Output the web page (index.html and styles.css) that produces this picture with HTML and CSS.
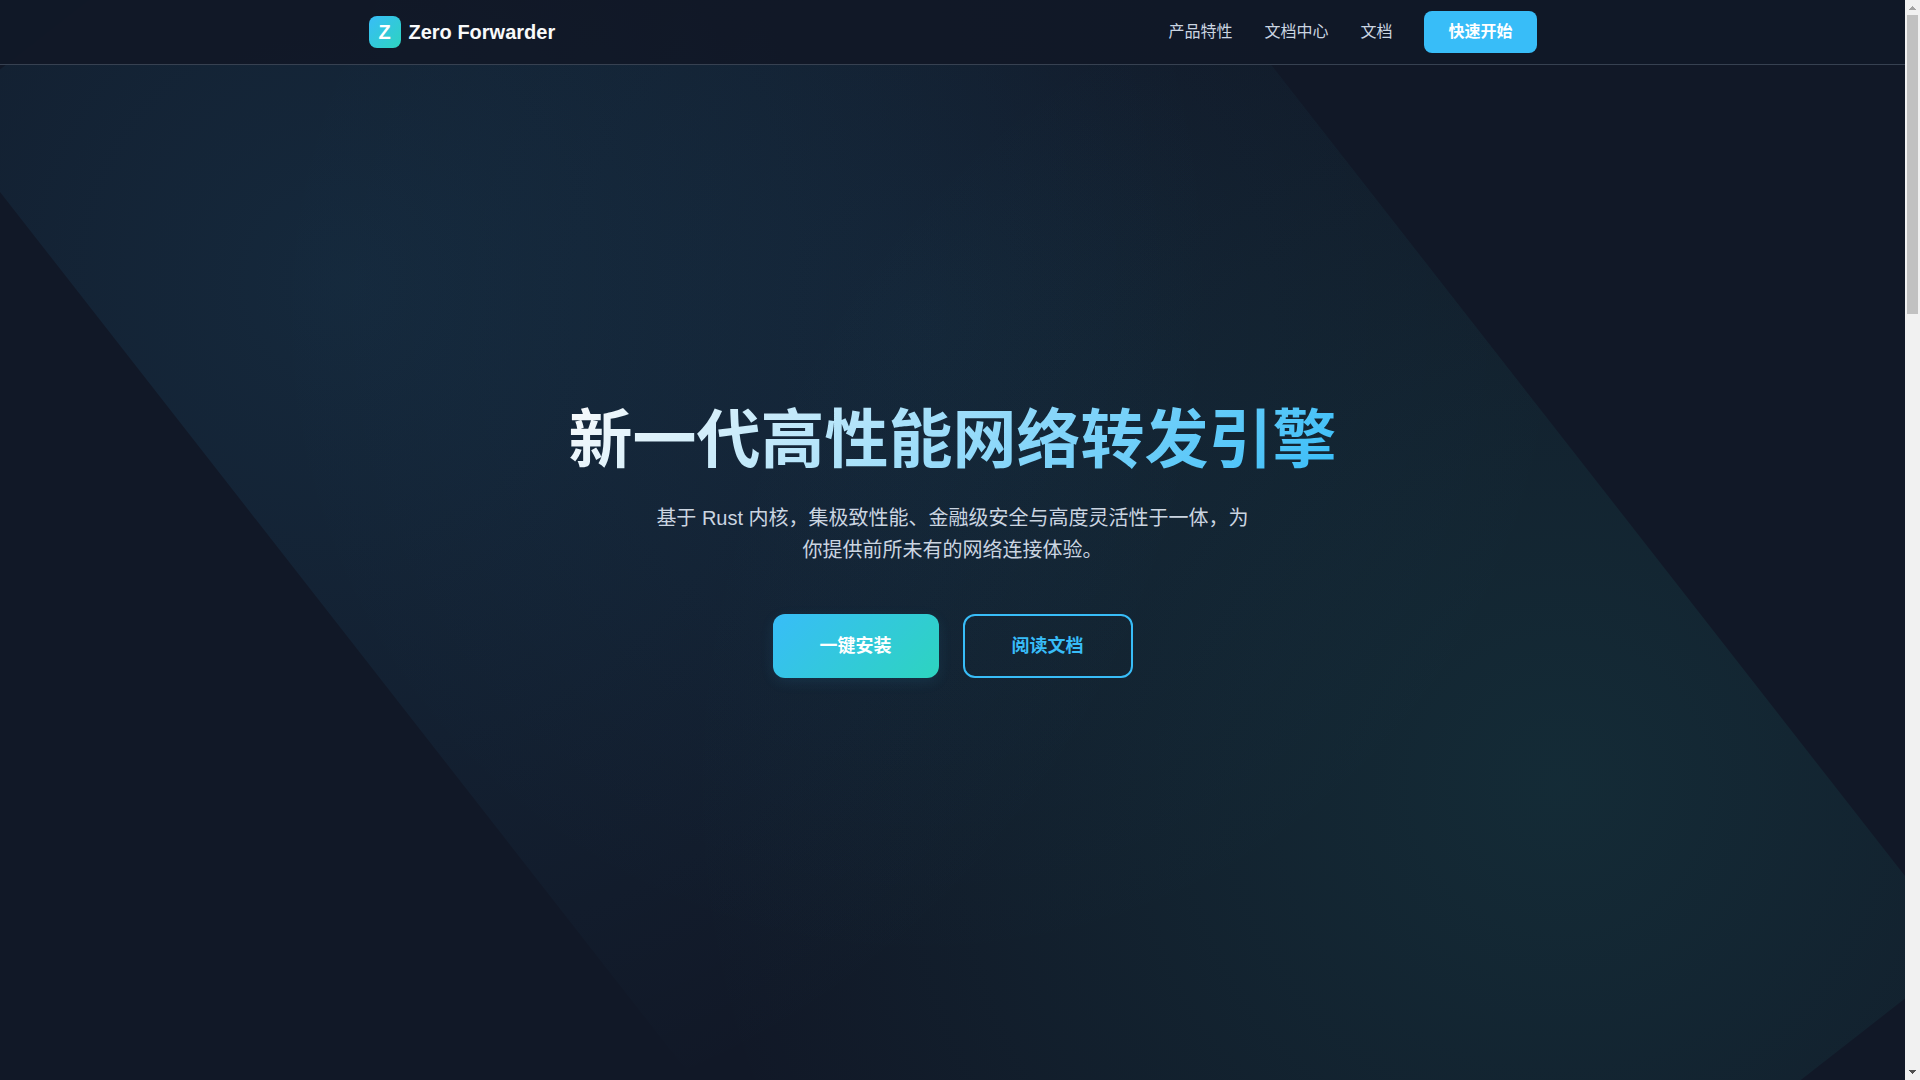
FILE: index.html
```html
<!DOCTYPE html>
<html lang="zh-CN">
<head>
    <meta charset="UTF-8">
    <meta name="viewport" content="width=device-width, initial-scale=1.0">
    <title>Zero Forwarder</title>
    <link rel="stylesheet" href="styles.css">
</head>
<body>

<div class="page">
    <header class="header">
        <div class="container nav">
            <a class="logo" href="#">
                <span class="logo-icon">Z</span>
                <span>Zero Forwarder</span>
            </a>
            <nav class="nav-links">
                <a href="#features">产品特性</a>
                <a href="#docs">文档中心</a>
                <a href="#doc">文档</a>
                <button type="button" class="nav-cta">快速开始</button>
            </nav>
        </div>
    </header>

    <main class="hero">
        <div class="hero-content">
            <h1>新一代高性能网络转发引擎</h1>
            <p>基于 Rust 内核，集极致性能、金融级安全与高度灵活性于一体，为你提供前所未有的网络连接体验。</p>
            <div class="hero-buttons">
                <button type="button" class="btn btn-primary">一键安装</button>
                <button type="button" class="btn btn-secondary">阅读文档</button>
            </div>
        </div>
    </main>
</div>

<div class="scrollbar" aria-hidden="true">
    <svg class="arrow arrow-up" width="15" height="15" viewBox="0 0 15 15"><path d="M4 10h7v-1h-1v-1h-1v-1h-1v-1h-1v1h-1v1h-1v1h-1z"/></svg>
    <div class="track"><div class="thumb"></div></div>
    <svg class="arrow arrow-down" width="15" height="15" viewBox="0 0 15 15"><path d="M4 5h7v1h-1v1h-1v1h-1v1h-1v-1h-1v-1h-1v-1h-1z"/></svg>
</div>

</body>
</html>
```

FILE: styles.css
```css
:root {
    --bg: #111827;
    --border: #374151;
    --text: #f9fafb;
    --text-light: #cbd5e1;
    --blue: #38bdf8;
    --teal: #2dd4bf;
}
* {
    margin: 0;
    padding: 0;
    box-sizing: border-box;
}
body {
    display: flex;
    height: 100vh;
    overflow: hidden;
    font-family: "Liberation Sans", "Noto Sans CJK SC", sans-serif;
    font-size: 16px;
    line-height: 26px;
    color: var(--text);
    background-color: var(--bg);
}
a {
    color: inherit;
    text-decoration: none;
}
button {
    font-family: inherit;
    font-weight: 600;
    line-height: inherit;
    cursor: pointer;
}
.page {
    position: relative;
    flex: 1;
    min-width: 0;
}

/* Header */
.header {
    position: absolute;
    top: 0;
    left: 0;
    right: 0;
    z-index: 10;
    background: rgba(17, 24, 39, 0.95);
    border-bottom: 1px solid var(--border);
}
.container {
    max-width: 1200px;
    margin: 0 auto;
    padding: 0 16px;
}
.nav {
    display: flex;
    align-items: center;
    justify-content: space-between;
    height: 64px;
}
.logo {
    display: flex;
    align-items: center;
    gap: 8px;
    font-size: 20px;
    font-weight: 700;
}
.logo-icon {
    display: flex;
    align-items: center;
    justify-content: center;
    width: 32px;
    height: 32px;
    border-radius: 8px;
    background: linear-gradient(135deg, var(--blue), var(--teal));
    color: white;
}
.nav-links {
    display: flex;
    align-items: center;
    gap: 32px;
    color: var(--text-light);
}
.nav-cta {
    padding: 8px 24px;
    border: none;
    border-radius: 8px;
    background: var(--blue);
    color: white;
    font-size: 16px;
}

/* Hero */
.hero {
    position: relative;
    display: flex;
    align-items: center;
    justify-content: center;
    min-height: 100vh;
    overflow: hidden;
    text-align: center;
}
.hero::before {
    content: "";
    position: absolute;
    inset: 0;
    background:
        radial-gradient(circle at 20% 80%, rgba(56, 189, 248, 0.1) 0%, transparent 50%),
        radial-gradient(circle at 80% 20%, rgba(45, 212, 191, 0.1) 0%, transparent 50%),
        radial-gradient(circle at 40% 40%, rgba(56, 189, 248, 0.05) 0%, transparent 50%);
    transform: translateY(-6px) rotate(52deg);
}
.hero-content {
    position: relative;
    padding: 0 16px;
}
.hero h1 {
    margin-bottom: 24px;
    font-size: 64px;
    font-weight: 700;
    line-height: 76px;
    background: linear-gradient(135deg, var(--text), var(--blue));
    -webkit-background-clip: text;
    background-clip: text;
    color: transparent;
}
.hero p {
    max-width: 600px;
    margin: 0 auto 48px;
    font-size: 20px;
    line-height: 32px;
    color: var(--text-light);
}
.hero-buttons {
    display: flex;
    justify-content: center;
    gap: 24px;
}
.btn {
    padding: 16px 47px;
    border: none;
    border-radius: 12px;
    font-size: 18px;
    line-height: 28px;
}
.btn-primary {
    background: linear-gradient(135deg, var(--blue), var(--teal));
    box-shadow: 0 4px 14px rgba(56, 189, 248, 0.1);
    color: white;
}
.btn-secondary {
    border: 2px solid var(--blue);
    background: transparent;
    color: var(--blue);
}

/* Scrollbar */
.scrollbar {
    display: flex;
    flex-direction: column;
    width: 15px;
    background: #f1f1f1;
}
.arrow-up {
    fill: #a3a3a3;
}
.arrow-down {
    fill: #505050;
}
.track {
    flex: 1;
    padding: 0 2px;
}
.thumb {
    height: 28.5%;
    background: #c1c1c1;
}
```
